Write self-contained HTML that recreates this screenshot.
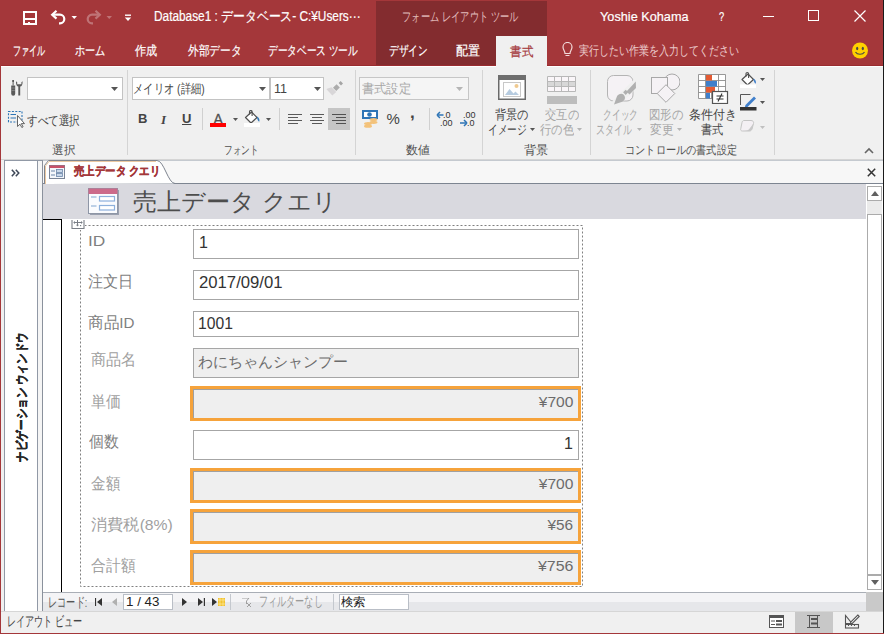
<!DOCTYPE html>
<html lang="ja">
<head>
<meta charset="utf-8">
<style>
*{margin:0;padding:0;box-sizing:border-box;}
html,body{width:884px;height:634px;overflow:hidden;background:#F0F0F0;}
body{position:relative;font-family:"Liberation Sans",sans-serif;color:#444;}
.a{position:absolute;}
.t{position:absolute;white-space:nowrap;line-height:1;}
/* title bar */
#title{left:0;top:0;width:884px;height:66px;background:#A4373A;}
#ctx{left:376px;top:1px;width:171px;height:65px;background:#832C2F;}
#seltab{left:496px;top:36px;width:51px;height:30px;background:#F0F0F0;}
#darkline{left:0;top:65px;width:884px;height:1px;background:#9A2C30;}
.wt{color:#fff;-webkit-text-stroke:0.2px #fff;}
/* ribbon */
#ribbon{left:1px;top:66px;width:882px;height:94px;background:#F0F0F0;border-top:1px solid #fff;border-bottom:1px solid #D5D5D5;}
.sep{position:absolute;width:1px;background:#D4D4D4;top:70px;height:85px;}
.combo{position:absolute;background:#fff;border:1px solid #C3C3C3;height:23px;}
.glabel{position:absolute;top:144px;font-size:12px;color:#505050;white-space:nowrap;line-height:1;}
/* frame borders */
#lred{left:0;top:0;width:1px;height:634px;background:#A4373A;}
#rblk{left:883px;top:0;width:1px;height:634px;background:#1a1a1a;}
#bred{left:0;top:633px;width:884px;height:1px;background:#A4373A;}
/* nav pane */
#nav{left:4px;top:160px;width:34px;height:452px;background:#fff;border:1px solid #9199A6;border-bottom:none;}
#navstrip{left:38px;top:160px;width:5px;height:452px;background:#F5F5F5;border-right:1px solid #8A919C;border-top:1px solid #9199A6;}
/* doc tabs */
#tabbar{left:43px;top:160px;width:840px;height:24px;background:#F7F7F7;border-top:1px solid #C5CAD0;border-bottom:1px solid #7D8591;}
#doctab{left:44px;top:161px;width:128px;height:23px;background:#fff;border:1px solid #C9B9A9;border-bottom:none;border-radius:5px 14px 0 0;}
#header{left:43px;top:184px;width:823px;height:35px;background:#D9D9DF;}
#formarea{left:43px;top:219px;width:824px;height:373px;background:#fff;}
#blackbox{left:43px;top:219px;width:19px;height:373px;border-top:1px solid #000;border-right:1px solid #000;}
#vscroll{left:866px;top:184px;width:17px;height:408px;background:#fff;}
.sbtn{position:absolute;background:#fff;border:1px solid #ABABAB;}
/* form */
#dash{left:80px;top:225px;width:503px;height:362px;border:1px dashed #8A8A8A;}
.lbl{position:absolute;font-size:15.5px;color:#7F7F7F;white-space:nowrap;line-height:1;}
.box{position:absolute;left:193px;width:386px;background:#fff;border:1px solid #A6A6A6;}
.gbox{background:#EFEFEF;}
.obox{position:absolute;left:190px;width:391px;height:35px;border:3px solid #F6A33B;background:#EFEFEF;}
.obox::before{content:"";position:absolute;left:0;top:0;right:0;height:1px;background:#A0A0A0;}
.obox::after{content:"";position:absolute;left:0;top:0;bottom:0;width:1px;background:#A0A0A0;}
.val{position:absolute;font-size:16px;color:#333;white-space:nowrap;line-height:1;}
.rval{position:absolute;font-size:15px;color:#6B6B6B;white-space:nowrap;line-height:1;}
/* record nav */
#recnav{left:43px;top:592px;width:823px;height:19px;background:linear-gradient(#F4F4F6 0,#F4F4F6 9px,#E6E7EA 9px,#E6E7EA 100%);border-top:1px solid #A9AEB6;}
#grip{left:866px;top:592px;width:17px;height:19px;background:#C9C9C9;}
#status{left:1px;top:611px;width:882px;height:22px;background:#F0F0F0;border-top:1px solid #D6D6D6;}
</style>
</head>
<body>
<div id="title" class="a"></div>
<div id="ctx" class="a"></div>
<div id="seltab" class="a"></div>
<div id="darkline" class="a"></div>

<!-- QAT -->
<svg class="a" style="left:23px;top:11px" width="14" height="14" viewBox="0 0 14 14"><rect x="1" y="1" width="12" height="12" fill="none" stroke="#fff" stroke-width="2"/><rect x="1" y="7" width="12" height="2" fill="#fff"/><rect x="5" y="11" width="2" height="3" fill="#fff"/></svg>
<svg class="a" style="left:50px;top:9px" width="29" height="16" viewBox="0 0 29 16"><path d="M3 5.7H10a4.3 4.3 0 0 1 0 8.6H9" fill="none" stroke="#fff" stroke-width="2.2"/><path d="M6.5 1.8L2.2 5.7l4.3 3.9" fill="none" stroke="#fff" stroke-width="2.2"/><path d="M21.5 7h5.5l-2.75 3z" fill="#fff"/></svg>
<svg class="a" style="left:86px;top:9px" width="29" height="16" viewBox="0 0 29 16" opacity="0.3"><path d="M13 5.7H6a4.3 4.3 0 0 0 0 8.6H7" fill="none" stroke="#fff" stroke-width="2.2"/><path d="M9.5 1.8l4.3 3.9-4.3 3.9" fill="none" stroke="#fff" stroke-width="2.2"/><path d="M20.5 7h5.5l-2.75 3z" fill="#fff"/></svg>
<svg class="a" style="left:124px;top:14px" width="8" height="8" viewBox="0 0 8 8"><path d="M1 1.2h6" stroke="#fff" stroke-width="1.4"/><path d="M0.8 3.6h6.4L4 7z" fill="#fff"/></svg>
<div class="t wt" style="left:153.89px;top:9px;font-size:14px;transform:scaleX(0.8458);transform-origin:0 0">Database1 : データベース- C:¥Users···</div>
<div class="t" style="left:402.29px;top:10px;font-size:13px;color:#E2BDBD;transform:scaleX(0.7151);transform-origin:0 0">フォーム レイアウト ツール</div>
<div class="t wt" style="left:600.00px;top:10px;font-size:13px;transform:scaleX(0.9780);transform-origin:0 0">Yoshie Kohama</div>
<div class="t wt" style="left:719.00px;top:10px;font-size:13px;transform:scaleX(0.7143);transform-origin:0 0">?</div>
<div class="a" style="left:763px;top:16px;width:11px;height:1px;background:#fff"></div>
<div class="a" style="left:808px;top:10px;width:11px;height:11px;border:1px solid #fff"></div>
<svg class="a" style="left:854px;top:10px" width="12" height="12" viewBox="0 0 12 12"><path d="M0.5 0.5l11 11M11.5 0.5l-11 11" stroke="#fff" stroke-width="1.2"/></svg>

<!-- tabs -->
<div class="t wt" style="left:13.47px;top:44px;font-size:13px;transform:scaleX(0.6198);transform-origin:0 0">ファイル</div>
<div class="t wt" style="left:74.51px;top:44px;font-size:13px;transform:scaleX(0.7821);transform-origin:0 0">ホーム</div>
<div class="t wt" style="left:134.92px;top:44px;font-size:13px;transform:scaleX(0.8523);transform-origin:0 0">作成</div>
<div class="t wt" style="left:188.00px;top:44px;font-size:13px;transform:scaleX(0.8224);transform-origin:0 0">外部データ</div>
<div class="t wt" style="left:268.00px;top:44px;font-size:13px;transform:scaleX(0.7438);transform-origin:0 0">データベース ツール</div>
<div class="t wt" style="left:389.00px;top:44px;font-size:13px;transform:scaleX(0.7435);transform-origin:0 0">デザイン</div>
<div class="t wt" style="left:456.00px;top:44px;font-size:13px;transform:scaleX(0.9231);transform-origin:0 0">配置</div>
<div class="t" style="left:509.96px;top:44.5px;font-size:13px;color:#A4373A;-webkit-text-stroke:0.2px #A4373A;transform:scaleX(0.8862);transform-origin:0 0">書式</div>
<svg class="a" style="left:562px;top:42px" width="11" height="16" viewBox="0 0 11 16"><path d="M3 11.5C3 9 1 8 1 5a4.5 4.5 0 0 1 9 0c0 3-2 4-2 6.5z M3.5 13.5h4" fill="none" stroke="#F2DADA" stroke-width="1.2"/></svg>
<div class="t" style="left:579.00px;top:44px;font-size:13px;color:#EBCACA;transform:scaleX(0.7692);transform-origin:0 0">実行したい作業を入力してください</div>
<svg class="a" style="left:851px;top:42px" width="18" height="17" viewBox="0 0 18 17"><circle cx="9" cy="8.5" r="8" fill="#FFD100"/><ellipse cx="6.2" cy="6.5" rx="1.1" ry="1.7" fill="#4a4a4a"/><ellipse cx="11.8" cy="6.5" rx="1.1" ry="1.7" fill="#4a4a4a"/><path d="M4.5 10a5 4 0 0 0 9 0" fill="none" stroke="#4a4a4a" stroke-width="1.2"/></svg>

<!-- ribbon -->

<div id="ribbon" class="a"></div>
<div class="a" style="left:496px;top:65px;width:51px;height:2px;background:#F0F0F0"></div>
<!-- group: 選択 -->
<svg class="a" style="left:11px;top:80px" width="13" height="16" viewBox="0 0 13 16"><rect x="1.2" y="0" width="1.8" height="2" fill="#5A5A5A"/><rect x="1.6" y="2" width="1" height="3.5" fill="#5A5A5A"/><path d="M0.2 5.5h4v8.2a2 2 0 0 1-4 0z" fill="#5A5A5A"/><path d="M0.5 8h3.4M0.5 10.5h3.4" stroke="#9A9A9A" stroke-width="0.6"/><path d="M5 1.2C4.8 4.8 6 6.3 7.3 6.6V15.5H9.2V6.6C10.6 6.3 11.8 4.8 11.6 1.2L10.4 2.3V4.3H6.2V2.3z" fill="#5A5A5A"/></svg>
<div class="combo" style="left:27px;top:77px;width:96px;"></div>
<svg class="a" style="left:111px;top:87px" width="7" height="4"><path d="M0 0h7L3.5 4z" fill="#555"/></svg>
<svg class="a" style="left:7px;top:110px" width="18" height="18" viewBox="0 0 18 18"><rect x="1.5" y="1.5" width="13.5" height="10.5" fill="none" stroke="#2E75B6" stroke-width="1.1" stroke-dasharray="2 1.4"/><path d="M3.5 4.5h5.5M3.5 8h5.5" stroke="#2E75B6" stroke-width="1.1"/><path d="M10.5 5.5v11l2.5-2.3 1.8 3.3 1.3-0.7-1.8-3.2h3.2z" fill="#fff" stroke="#555" stroke-width="0.9" stroke-linejoin="round"/></svg>
<div class="t" style="left:27.00px;top:114px;font-size:13px;color:#444;transform:scaleX(0.8154);transform-origin:0 0">すべて選択</div>
<div class="glabel" style="left:52.00px;transform:scaleX(0.9679);transform-origin:0 0">選択</div>
<div class="sep" style="left:127px;"></div>
<!-- group: フォント -->
<div class="combo" style="left:132px;top:77px;width:138px;"></div>
<div class="t" style="left:133.49px;top:82px;font-size:13px;color:#444;transform:scaleX(0.7934);transform-origin:0 0">メイリオ (詳細)</div>
<svg class="a" style="left:259px;top:87px" width="7" height="4"><path d="M0 0h7L3.5 4z" fill="#555"/></svg>
<div class="combo" style="left:270px;top:77px;width:54px;"></div>
<div class="t" style="left:273.58px;top:82px;font-size:13px;color:#444;transform:scaleX(0.9661);transform-origin:0 0">11</div>
<svg class="a" style="left:314px;top:87px" width="7" height="4"><path d="M0 0h7L3.5 4z" fill="#555"/></svg>
<svg class="a" style="left:326px;top:80px" width="17" height="16" viewBox="0 0 17 16"><path d="M13.8 4.2l2-2" stroke="#A5A5A5" stroke-width="3.4"/><path d="M8.6 9.4l3.6-3.6" stroke="#ACACAC" stroke-width="4.6"/><path d="M5.5 7.2l4.8 4.8-4 3.5L0.3 9z" fill="#D8D6D8"/></svg>
<div class="t" style="left:138px;top:112px;font-size:13px;font-weight:bold;color:#444;">B</div>
<div class="t" style="left:161px;top:113px;font-size:13px;font-weight:bold;font-style:italic;font-family:'Liberation Serif',serif;color:#444;">I</div>
<div class="t" style="left:182px;top:112px;font-size:13px;font-weight:bold;text-decoration:underline;color:#444;">U</div>
<div class="a" style="left:202px;top:108px;width:1px;height:22px;background:#D0D0D0"></div>
<div class="t" style="left:213.5px;top:112px;font-size:14px;color:#505050;-webkit-text-stroke:0.3px #505050;">A</div>
<div class="a" style="left:210px;top:123px;width:16px;height:4px;background:#FF0000"></div>
<svg class="a" style="left:233px;top:118px" width="5" height="3"><path d="M0 0h5L2.5 3z" fill="#555"/></svg>
<svg class="a" style="left:244px;top:110px" width="17" height="17" viewBox="0 0 17 17"><path d="M1.5 7.5L7.5 2l5.5 5.5-6 5.5z" fill="#fff" stroke="#505050" stroke-width="1.2" stroke-linejoin="round"/><path d="M5.5 4.5V1.8a1.3 1.3 0 0 1 2.6 0V6" fill="none" stroke="#505050" stroke-width="1.1"/><path d="M13 6.5c2 1.2 3 3 2.2 5.3-1.3-.8-2.2-3-2.2-5.3z" fill="#2E75B6"/><rect x="0" y="13" width="16" height="4" fill="#fff"/></svg>
<svg class="a" style="left:266px;top:118px" width="5" height="3"><path d="M0 0h5L2.5 3z" fill="#555"/></svg>
<div class="a" style="left:279px;top:108px;width:1px;height:22px;background:#D0D0D0"></div>
<svg class="a" style="left:288px;top:113px" width="16" height="12" viewBox="0 0 16 12"><path d="M0 1.5h14M0 4.5h10M0 7.5h14M0 10.5h10" stroke="#595959" stroke-width="1"/></svg>
<svg class="a" style="left:310px;top:113px" width="16" height="12" viewBox="0 0 16 12"><path d="M0 1.5h14M2 4.5h10M0 7.5h14M2 10.5h10" stroke="#595959" stroke-width="1"/></svg>
<div class="a" style="left:328px;top:108px;width:22px;height:22px;background:#C5C5C5"></div>
<svg class="a" style="left:332px;top:113px" width="16" height="12" viewBox="0 0 16 12"><path d="M0 1.5h14M4 4.5h10M0 7.5h14M4 10.5h10" stroke="#505050" stroke-width="1"/></svg>
<div class="glabel" style="left:223.54px;transform:scaleX(0.7172);transform-origin:0 0">フォント</div>
<div class="sep" style="left:355px;"></div>
<!-- group: 数値 -->
<div class="combo" style="left:359px;top:77px;width:110px;border-color:#C6C6C6;background:#F5F5F5"></div>
<div class="t" style="left:362.00px;top:82px;font-size:13px;color:#A6A6A6;transform:scaleX(0.9412);transform-origin:0 0">書式設定</div>
<svg class="a" style="left:456px;top:87px" width="7" height="4"><path d="M0 0h7L3.5 4z" fill="#B5B5B5"/></svg>
<svg class="a" style="left:362px;top:110px" width="17" height="18" viewBox="0 0 17 18"><rect x="0" y="0" width="16" height="9" fill="#2E75B6"/><rect x="2" y="2" width="12" height="5" fill="#fff"/><circle cx="7.5" cy="4.5" r="2.3" fill="#2E75B6"/><ellipse cx="11.5" cy="9.5" rx="4" ry="1.6" fill="#F3C27A"/><ellipse cx="11.5" cy="12.3" rx="4" ry="1.6" fill="#F3C27A"/><ellipse cx="6" cy="13.5" rx="4" ry="1.6" fill="#F3C27A"/><ellipse cx="6" cy="16.2" rx="4" ry="1.6" fill="#F3C27A"/></svg>
<div class="t" style="left:386.5px;top:111px;font-size:15px;color:#444;">%</div>
<div class="t" style="left:410px;top:104px;font-size:17px;font-weight:bold;color:#444;">,</div>
<div class="a" style="left:429px;top:108px;width:1px;height:22px;background:#D0D0D0"></div>
<svg class="a" style="left:436px;top:110px" width="18" height="17" viewBox="0 0 18 17"><text x="7" y="8" font-size="9" fill="#333" font-family="Liberation Sans">.0</text><text x="4" y="16" font-size="9" fill="#333" font-family="Liberation Sans">.00</text><path d="M1.5 5h6" stroke="#2E75B6" stroke-width="1.5"/><path d="M1 5l3-3M1 5l3 3" stroke="#2E75B6" stroke-width="1.5"/></svg>
<svg class="a" style="left:459px;top:110px" width="18" height="17" viewBox="0 0 18 17"><text x="4" y="8" font-size="9" fill="#333" font-family="Liberation Sans">.00</text><text x="8" y="16" font-size="9" fill="#333" font-family="Liberation Sans">.0</text><path d="M1 13h6" stroke="#2E75B6" stroke-width="1.5"/><path d="M8 13l-3-3M8 13l-3 3" stroke="#2E75B6" stroke-width="1.5"/></svg>
<div class="glabel" style="left:405.60px;transform:scaleX(1.0000);transform-origin:0 0">数値</div>
<div class="sep" style="left:482px;"></div>
<!-- group: 背景 -->
<svg class="a" style="left:498px;top:75px" width="28" height="25" viewBox="0 0 28 25"><rect x="0.75" y="0.75" width="26.5" height="23.5" fill="#fff" stroke="#6A6A6A" stroke-width="1.5"/><rect x="0" y="0" width="28" height="5" fill="#6E6E6E"/><rect x="5.5" y="7.5" width="17" height="14" fill="#fff" stroke="#C8C8C8"/><path d="M7 20l4.5-6 4 4.5 2-2 3.5 3.5z" fill="#B7CCE0"/><circle cx="18.5" cy="11" r="2" fill="#EFC98F"/></svg>
<div class="t" style="left:494.87px;top:108px;font-size:13px;color:#444;transform:scaleX(0.8641);transform-origin:0 0">背景の</div>
<div class="t" style="left:487.84px;top:123px;font-size:13px;color:#444;transform:scaleX(0.7485);transform-origin:0 0">イメージ</div>
<svg class="a" style="left:530px;top:128px" width="5" height="3"><path d="M0 0h5L2.5 3z" fill="#555"/></svg>
<svg class="a" style="left:547px;top:76px" width="30" height="29" viewBox="0 0 30 29"><rect x="0.5" y="5.5" width="28" height="5" fill="#D8D8D8"/><rect x="0.5" y="0.5" width="28" height="5" fill="#FAF6F9"/><rect x="0.5" y="10.5" width="28" height="5" fill="#FAF6F9"/><path d="M0.5 0.5h28v15h-28z M0.5 5.5h28M0.5 10.5h28M7.5 0.5v15M14.5 0.5v15M21.5 0.5v15" fill="none" stroke="#B8B8B8"/><rect x="-1" y="20" width="32" height="8" fill="#BDBDBD"/></svg>
<div class="t" style="left:545.00px;top:108px;font-size:13px;color:#A6A6A6;transform:scaleX(0.8718);transform-origin:0 0">交互の</div>
<div class="t" style="left:540.00px;top:123px;font-size:13px;color:#A6A6A6;transform:scaleX(0.8718);transform-origin:0 0">行の色</div>
<svg class="a" style="left:577px;top:128px" width="5" height="3"><path d="M0 0h5L2.5 3z" fill="#B5B5B5"/></svg>
<div class="glabel" style="left:523.94px;transform:scaleX(1.0231);transform-origin:0 0">背景</div>
<div class="sep" style="left:590px;"></div>
<!-- group: コントロールの書式設定 -->
<svg class="a" style="left:606px;top:74px" width="32" height="32" viewBox="0 0 32 32"><rect x="1.5" y="1.5" width="25.5" height="25.5" rx="6" fill="#F5F2F5" stroke="#B4B4B4"/><path d="M31 8L9 30" stroke="#F0F0F0" stroke-width="8"/><path d="M29.8 7.5L30 14 23.5 20.5 20.5 17.5z" fill="#B0B0B0"/><path d="M22.3 18.3l-2.6 2.6-2.6-2.6 2.6-2.6z" fill="#B0B0B0"/><path d="M17.5 20.5c2.2 2 2 4.8-0.5 7L8 30.5l3.2-8.7c2-2.2 4.3-2.8 6.3-1.3z" fill="#B0B0B0"/></svg>
<div class="t" style="left:603.33px;top:108px;font-size:13px;color:#A6A6A6;transform:scaleX(0.6742);transform-origin:0 0">クイック</div>
<div class="t" style="left:596.10px;top:123px;font-size:13px;color:#A6A6A6;transform:scaleX(0.6908);transform-origin:0 0">スタイル</div>
<svg class="a" style="left:637px;top:128px" width="5" height="3"><path d="M0 0h5L2.5 3z" fill="#B5B5B5"/></svg>
<svg class="a" style="left:650px;top:73px" width="30" height="31" viewBox="0 0 30 31"><circle cx="22" cy="9" r="8" fill="#F5F2F5" stroke="#A8A8A8"/><rect x="1.5" y="4.5" width="16" height="16" fill="#F5F2F5" stroke="#A8A8A8"/><path d="M16 11.7L24.8 20.5 16 29.3 7.2 20.5z" fill="#F5F2F5" stroke="#A8A8A8"/></svg>
<div class="t" style="left:648.58px;top:108px;font-size:13px;color:#A6A6A6;transform:scaleX(0.8787);transform-origin:0 0">図形の</div>
<div class="t" style="left:649.53px;top:123px;font-size:13px;color:#A6A6A6;transform:scaleX(0.9012);transform-origin:0 0">変更</div>
<svg class="a" style="left:677px;top:128px" width="5" height="3"><path d="M0 0h5L2.5 3z" fill="#B5B5B5"/></svg>
<svg class="a" style="left:698px;top:74px" width="31" height="30" viewBox="0 0 31 30"><rect x="0.5" y="0.5" width="27" height="24" fill="#fff"/><path d="M0.5 0.5h27v24h-27z M0.5 6.5h27M0.5 12.5h27M0.5 18.5h27M7.5 0.5v24M13.5 0.5v24M20.5 0.5v24" fill="none" stroke="#8C8C8C" stroke-width="0.9"/><rect x="8" y="1" width="6" height="5.5" fill="#E35A33"/><rect x="8" y="7" width="11" height="5.5" fill="#3F7FCB"/><rect x="8" y="13" width="9" height="5.5" fill="#E35A33"/><rect x="8" y="19" width="4" height="5.5" fill="#3F7FCB"/><rect x="14.5" y="17.5" width="15" height="12" fill="#fff" stroke="#555" stroke-width="1.2"/><path d="M18.5 22h7M18.5 25h7M24 19.5l-4 8" stroke="#333" stroke-width="1.1"/></svg>
<div class="t" style="left:689.00px;top:108px;font-size:13px;color:#444;transform:scaleX(0.9231);transform-origin:0 0">条件付き</div>
<div class="t" style="left:700.83px;top:123px;font-size:13px;color:#444;transform:scaleX(0.8583);transform-origin:0 0">書式</div>
<svg class="a" style="left:740px;top:71px" width="17" height="17" viewBox="0 0 17 17"><path d="M2 8.5L8 3l5.5 5.5-6 5.5z" fill="#fff" stroke="#505050" stroke-width="1.2" stroke-linejoin="round"/><path d="M6 5.5V2.8a1.3 1.3 0 0 1 2.6 0V7" fill="none" stroke="#505050" stroke-width="1.1"/><path d="M13.5 7.5c2 1.2 3 3 2.2 5.3-1.3-.8-2.2-3-2.2-5.3z" fill="#3F7FCB"/><rect x="0" y="13.5" width="16" height="3.5" fill="#fff"/></svg>
<svg class="a" style="left:760px;top:78px" width="5" height="3"><path d="M0 0h5L2.5 3z" fill="#555"/></svg>
<svg class="a" style="left:740px;top:94px" width="17" height="17" viewBox="0 0 17 17"><path d="M0.5 11V0.5h10" fill="none" stroke="#555" stroke-width="1"/><path d="M14 2.5l2 2-8.5 8.5-2.8 0.8 0.8-2.8z" fill="#3F7FCB"/><rect x="0" y="13" width="16.5" height="3.5" fill="#333"/></svg>
<svg class="a" style="left:760px;top:101px" width="5" height="3"><path d="M0 0h5L2.5 3z" fill="#555"/></svg>
<svg class="a" style="left:740px;top:119px" width="16" height="13" viewBox="0 0 16 13"><path d="M4 1.5h7c2 0 3 1.5 2.5 3L12 10c-.5 1.5-1.5 2-3 2H2.5C1 12 .3 11 .8 9.5L2 3.5C2.3 2.2 3 1.5 4 1.5z" fill="#F4F0F4" stroke="#C4C4C4"/><path d="M13.5 4.5L12 10c-.5 1.5-1.5 2-3 2H4c3 0 5-1 6-3z" fill="#C8C8C8"/></svg>
<svg class="a" style="left:760px;top:126px" width="5" height="3"><path d="M0 0h5L2.5 3z" fill="#C0C0C0"/></svg>
<div class="glabel" style="left:625.05px;transform:scaleX(0.8483);transform-origin:0 0">コントロールの書式設定</div>
<div class="sep" style="left:774px;"></div>
<svg class="a" style="left:864px;top:147px" width="10" height="7" viewBox="0 0 10 7"><path d="M1 6l4-4 4 4" fill="none" stroke="#666" stroke-width="1.6"/></svg>

<!-- nav pane -->
<div id="nav" class="a"></div>
<div id="navstrip" class="a"></div>
<svg class="a" style="left:11px;top:169px" width="9" height="8" viewBox="0 0 9 8"><path d="M0.8 0.8l3 3.2-3 3.2M4.8 0.8l3 3.2-3 3.2" fill="none" stroke="#3D4757" stroke-width="1.5"/></svg>
<div class="t" style="left:22px;top:397px;font-size:12.5px;font-weight:bold;color:#262626;-webkit-text-stroke:0.4px #262626;transform:translate(-50%,-50%) rotate(-90deg) scaleX(0.81);">ナビゲーション ウィンドウ</div>
<!-- doc -->
<div id="tabbar" class="a"></div>
<svg class="a" style="left:40px;top:158px" width="140" height="28" viewBox="0 0 140 28"><path d="M4.5 26V7.5L8.5 2.5H117C124 2.5 128 25.5 135 25.5H140" fill="#fff" stroke="#7F8590" stroke-width="1"/><path d="M5.5 26V8L9 3.5H116" fill="none" stroke="#EBC9A2" stroke-width="1"/></svg>
<svg class="a" style="left:49px;top:165px" width="16" height="14" viewBox="0 0 16 14"><rect x="0.5" y="0.5" width="15" height="13" fill="#F4F7FB" stroke="#7A8597"/><rect x="0.5" y="0.5" width="15" height="2.5" fill="#C8526A"/><path d="M2 6h4M2 10h4" stroke="#6B85A8"/><rect x="7.5" y="4.5" width="6" height="3" fill="#C9D8EA" stroke="#6B85A8" stroke-width="0.8"/><rect x="7.5" y="8.5" width="6" height="3" fill="#C9D8EA" stroke="#6B85A8" stroke-width="0.8"/></svg>
<div class="t" style="left:74.48px;top:165px;font-size:12px;font-weight:bold;color:#A4373A;-webkit-text-stroke:0.35px #A4373A;transform:scaleX(0.8663);transform-origin:0 0">売上データ クエリ</div>
<svg class="a" style="left:867px;top:168px" width="9" height="9" viewBox="0 0 9 9"><path d="M0.8 0.8l7.4 7.4M8.2 0.8L0.8 8.2" stroke="#333" stroke-width="1.5"/></svg>
<div id="header" class="a"></div>
<svg class="a" style="left:88px;top:188px" width="31" height="28" viewBox="0 0 31 28"><path d="M2 26.5h28.5V2" fill="none" stroke="#7F879A" stroke-width="1.2" opacity="0.7"/><rect x="0.5" y="0.5" width="29" height="25" fill="#FAFBFE" stroke="#8E96A6"/><rect x="0.5" y="0.5" width="29" height="5.5" fill="#CC6A8A"/><path d="M3 9h5.5M3 18h5.5" stroke="#A9C2E0" stroke-width="1.5"/><rect x="11.5" y="8.5" width="15" height="4.5" fill="#fff" stroke="#8DB0DC" stroke-width="1.2"/><rect x="11.5" y="17.5" width="15" height="4.5" fill="#fff" stroke="#8DB0DC" stroke-width="1.2"/></svg>
<div class="t" style="left:132.50px;top:190px;font-size:24px;color:#4D4D4D;transform:scaleX(1.0035);transform-origin:0 0">売上データ クエリ</div>
<div id="formarea" class="a"></div>
<div id="blackbox" class="a"></div>
<div id="vscroll" class="a"></div>
<div class="sbtn" style="left:867px;top:186px;width:15px;height:15px;"></div>
<svg class="a" style="left:871px;top:191px" width="8" height="5"><path d="M0 5h8L4 0z" fill="#606060"/></svg>
<div class="a" style="left:867px;top:201px;width:15px;height:13px;background:#EBEBEB"></div>
<div class="sbtn" style="left:867px;top:214px;width:15px;height:361px;"></div>
<div class="sbtn" style="left:867px;top:575px;width:15px;height:15px;"></div>
<svg class="a" style="left:871px;top:580px" width="8" height="5"><path d="M0 0h8L4 5z" fill="#606060"/></svg>
<!-- form -->
<svg class="a" style="left:79px;top:224px" width="506" height="365" viewBox="0 0 506 365"><rect x="1.5" y="1.5" width="502" height="361" fill="none" stroke="#808080" stroke-width="1" stroke-dasharray="2 2"/></svg>
<div class="a" style="left:71px;top:219px;width:14px;height:11px;background:#fff"></div><svg class="a" style="left:71px;top:219px" width="14" height="11" viewBox="0 0 14 11"><path d="M1 1v8.5h12V1" fill="none" stroke="#7A7F87" stroke-width="1.1"/><path d="M3 3.5h8M6.5 1v5.5" stroke="#7A7F87" stroke-width="1"/><path d="M2.2 3.5l1.8-1.6v3.2zM11.8 3.5l-1.8-1.6v3.2zM6.5 7.5l-1.6-1.8h3.2z" fill="#7A7F87"/><rect x="9" y="6" width="1.2" height="1.2" fill="#7A7F87"/></svg>

<div class="lbl" style="left:88.07px;top:233px;transform:scaleX(1.1163);transform-origin:0 0">ID</div>
<div class="box" style="top:229px;height:30px;"></div>
<div class="val" style="left:199.00px;top:235px">1</div>

<div class="lbl" style="left:88.37px;top:274px;transform:scaleX(0.9501);transform-origin:0 0">注文日</div>
<div class="box" style="top:270px;height:30px;"></div>
<div class="val" style="left:199.00px;top:275px;transform:scaleX(1.0434);transform-origin:0 0">2017/09/01</div>

<div class="lbl" style="left:88.38px;top:315px;transform:scaleX(0.9796);transform-origin:0 0">商品ID</div>
<div class="box" style="top:311px;height:26px;"></div>
<div class="val" style="left:198.03px;top:316px;transform:scaleX(0.9796);transform-origin:0 0">1001</div>

<div class="lbl" style="left:91.19px;top:352px;color:#A0A0A0;transform:scaleX(0.9474);transform-origin:0 0">商品名</div>
<div class="box gbox" style="top:348px;height:30px;"></div>
<div class="rval" style="left:198.10px;top:354px;transform:scaleX(0.9973);transform-origin:0 0">わにちゃんシャンプー</div>

<div class="lbl" style="left:91.19px;top:394px;color:#A0A0A0;transform:scaleX(0.9355);transform-origin:0 0">単価</div>
<div class="obox" style="top:386px;"></div>
<div class="rval" style="right:310.43px;top:394px;transform:scaleX(1.0379);transform-origin:100% 0">¥700</div>

<div class="lbl" style="left:88.81px;top:434px;transform:scaleX(0.9331);transform-origin:0 0">個数</div>
<div class="box" style="top:430px;height:30px;"></div>
<div class="val" style="right:311.00px;top:436px">1</div>

<div class="lbl" style="left:91.20px;top:476px;color:#A0A0A0;transform:scaleX(0.9081);transform-origin:0 0">金額</div>
<div class="obox" style="top:468px;"></div>
<div class="rval" style="right:310.43px;top:476px;transform:scaleX(1.0379);transform-origin:100% 0">¥700</div>

<div class="lbl" style="left:91.19px;top:517px;color:#A0A0A0;transform:scaleX(1.0133);transform-origin:0 0">消費税(8%)</div>
<div class="obox" style="top:509px;"></div>
<div class="rval" style="right:310.49px;top:517px;transform:scaleX(1.0204);transform-origin:100% 0">¥56</div>

<div class="lbl" style="left:91.16px;top:558px;color:#A0A0A0;transform:scaleX(0.9242);transform-origin:0 0">合計額</div>
<div class="obox" style="top:550px;"></div>
<div class="rval" style="right:310.51px;top:558px;transform:scaleX(1.0632);transform-origin:100% 0">¥756</div>

<!-- record nav -->
<div id="recnav" class="a"></div>
<div class="t" style="left:47.71px;top:596px;font-size:13.5px;color:#555;transform:scaleX(0.6556);transform-origin:0 0">レコード:</div>
<svg class="a" style="left:95px;top:598px" width="7" height="8" viewBox="0 0 7 8"><path d="M0.5 0v8" stroke="#333" stroke-width="1.2"/><path d="M7 0v8L2 4z" fill="#333"/></svg>
<svg class="a" style="left:112px;top:598px" width="5" height="8" viewBox="0 0 5 8"><path d="M5 0v8L0 4z" fill="#B0B0B0"/></svg>
<div class="a" style="left:123px;top:594px;width:50px;height:16px;background:#fff;border:1px solid #B9BEC6;"></div>
<div class="t" style="left:125.59px;top:596px;font-size:12px;color:#222;transform:scaleX(1.1137);transform-origin:0 0">1 / 43</div>
<svg class="a" style="left:182px;top:598px" width="5" height="8" viewBox="0 0 5 8"><path d="M0 0v8L5 4z" fill="#333"/></svg>
<svg class="a" style="left:198px;top:598px" width="7" height="8" viewBox="0 0 7 8"><path d="M0 0v8L5 4z" fill="#333"/><path d="M6.4 0v8" stroke="#333" stroke-width="1.2"/></svg>
<svg class="a" style="left:212px;top:597px" width="13" height="10" viewBox="0 0 13 10"><path d="M0 1v8L5 5z" fill="#333"/><rect x="6" y="1" width="7" height="8" fill="#F2C230"/><path d="M6 3h7M6 7h7M8 1v8M11 1v8" stroke="#FFF1B0" stroke-width="0.6"/></svg>
<div class="a" style="left:230px;top:594px;width:1px;height:16px;background:#C4C8CE"></div>
<svg class="a" style="left:242px;top:598px" width="10" height="9" viewBox="0 0 10 9"><path d="M0 0h7L4.5 3v3" fill="none" stroke="#A0A0A0"/><path d="M5 5l4 4M9 5l-4 4" stroke="#A0A0A0"/></svg>
<div class="t" style="left:259.49px;top:595px;font-size:13.5px;color:#9A9A9A;transform:scaleX(0.6493);transform-origin:0 0">フィルターなし</div>
<div class="a" style="left:333px;top:594px;width:1px;height:16px;background:#C4C8CE"></div>
<div class="a" style="left:339px;top:594px;width:70px;height:16px;background:#fff;border:1px solid #B9BEC6;"></div>
<div class="t" style="left:341.00px;top:596px;font-size:12px;color:#222;transform:scaleX(1.0288);transform-origin:0 0">検索</div>
<div id="grip" class="a"></div>
<!-- status -->
<div id="status" class="a"></div>
<div class="t" style="left:6.60px;top:615px;font-size:13.5px;color:#444;transform:scaleX(0.6513);transform-origin:0 0">レイアウト ビュー</div>
<svg class="a" style="left:769px;top:615px" width="15" height="13" viewBox="0 0 15 13"><rect x="0.5" y="0.5" width="14" height="12" fill="#fff" stroke="#555"/><rect x="0" y="0" width="15" height="3" fill="#555"/><path d="M2 6h4M2 9.5h4" stroke="#555"/><rect x="7" y="5" width="6" height="2" fill="#555"/><rect x="7" y="8.5" width="6" height="2" fill="#555"/></svg>
<div class="a" style="left:795px;top:612px;width:38px;height:21px;background:#C8C8C8"></div>
<svg class="a" style="left:807px;top:615px" width="14" height="13" viewBox="0 0 14 13"><path d="M0 0.5h13M0 12.5h13M2.5 0.5v12M10.5 0.5v12" fill="none" stroke="#555"/><rect x="4" y="3" width="6" height="2" fill="#555"/><rect x="4" y="7.5" width="6" height="2" fill="#555"/></svg>
<svg class="a" style="left:844px;top:614px" width="16" height="15" viewBox="0 0 16 15"><path d="M1.5 1.5V9.5H8z" fill="none" stroke="#555" stroke-width="1.1"/><path d="M13.8 1l1.4 1.4-7 7-2 .6.6-2z" fill="#fff" stroke="#555" stroke-width="1.1"/><rect x="1.5" y="10.5" width="13" height="3.5" fill="none" stroke="#555" stroke-width="1.1"/><path d="M4.5 10.5v1.5M7.5 10.5v1.5M10.5 10.5v1.5" stroke="#555"/></svg>
<!-- frame -->
<div id="lred" class="a"></div>
<div id="rblk" class="a"></div>
<div id="bred" class="a"></div>
</body>
</html>
